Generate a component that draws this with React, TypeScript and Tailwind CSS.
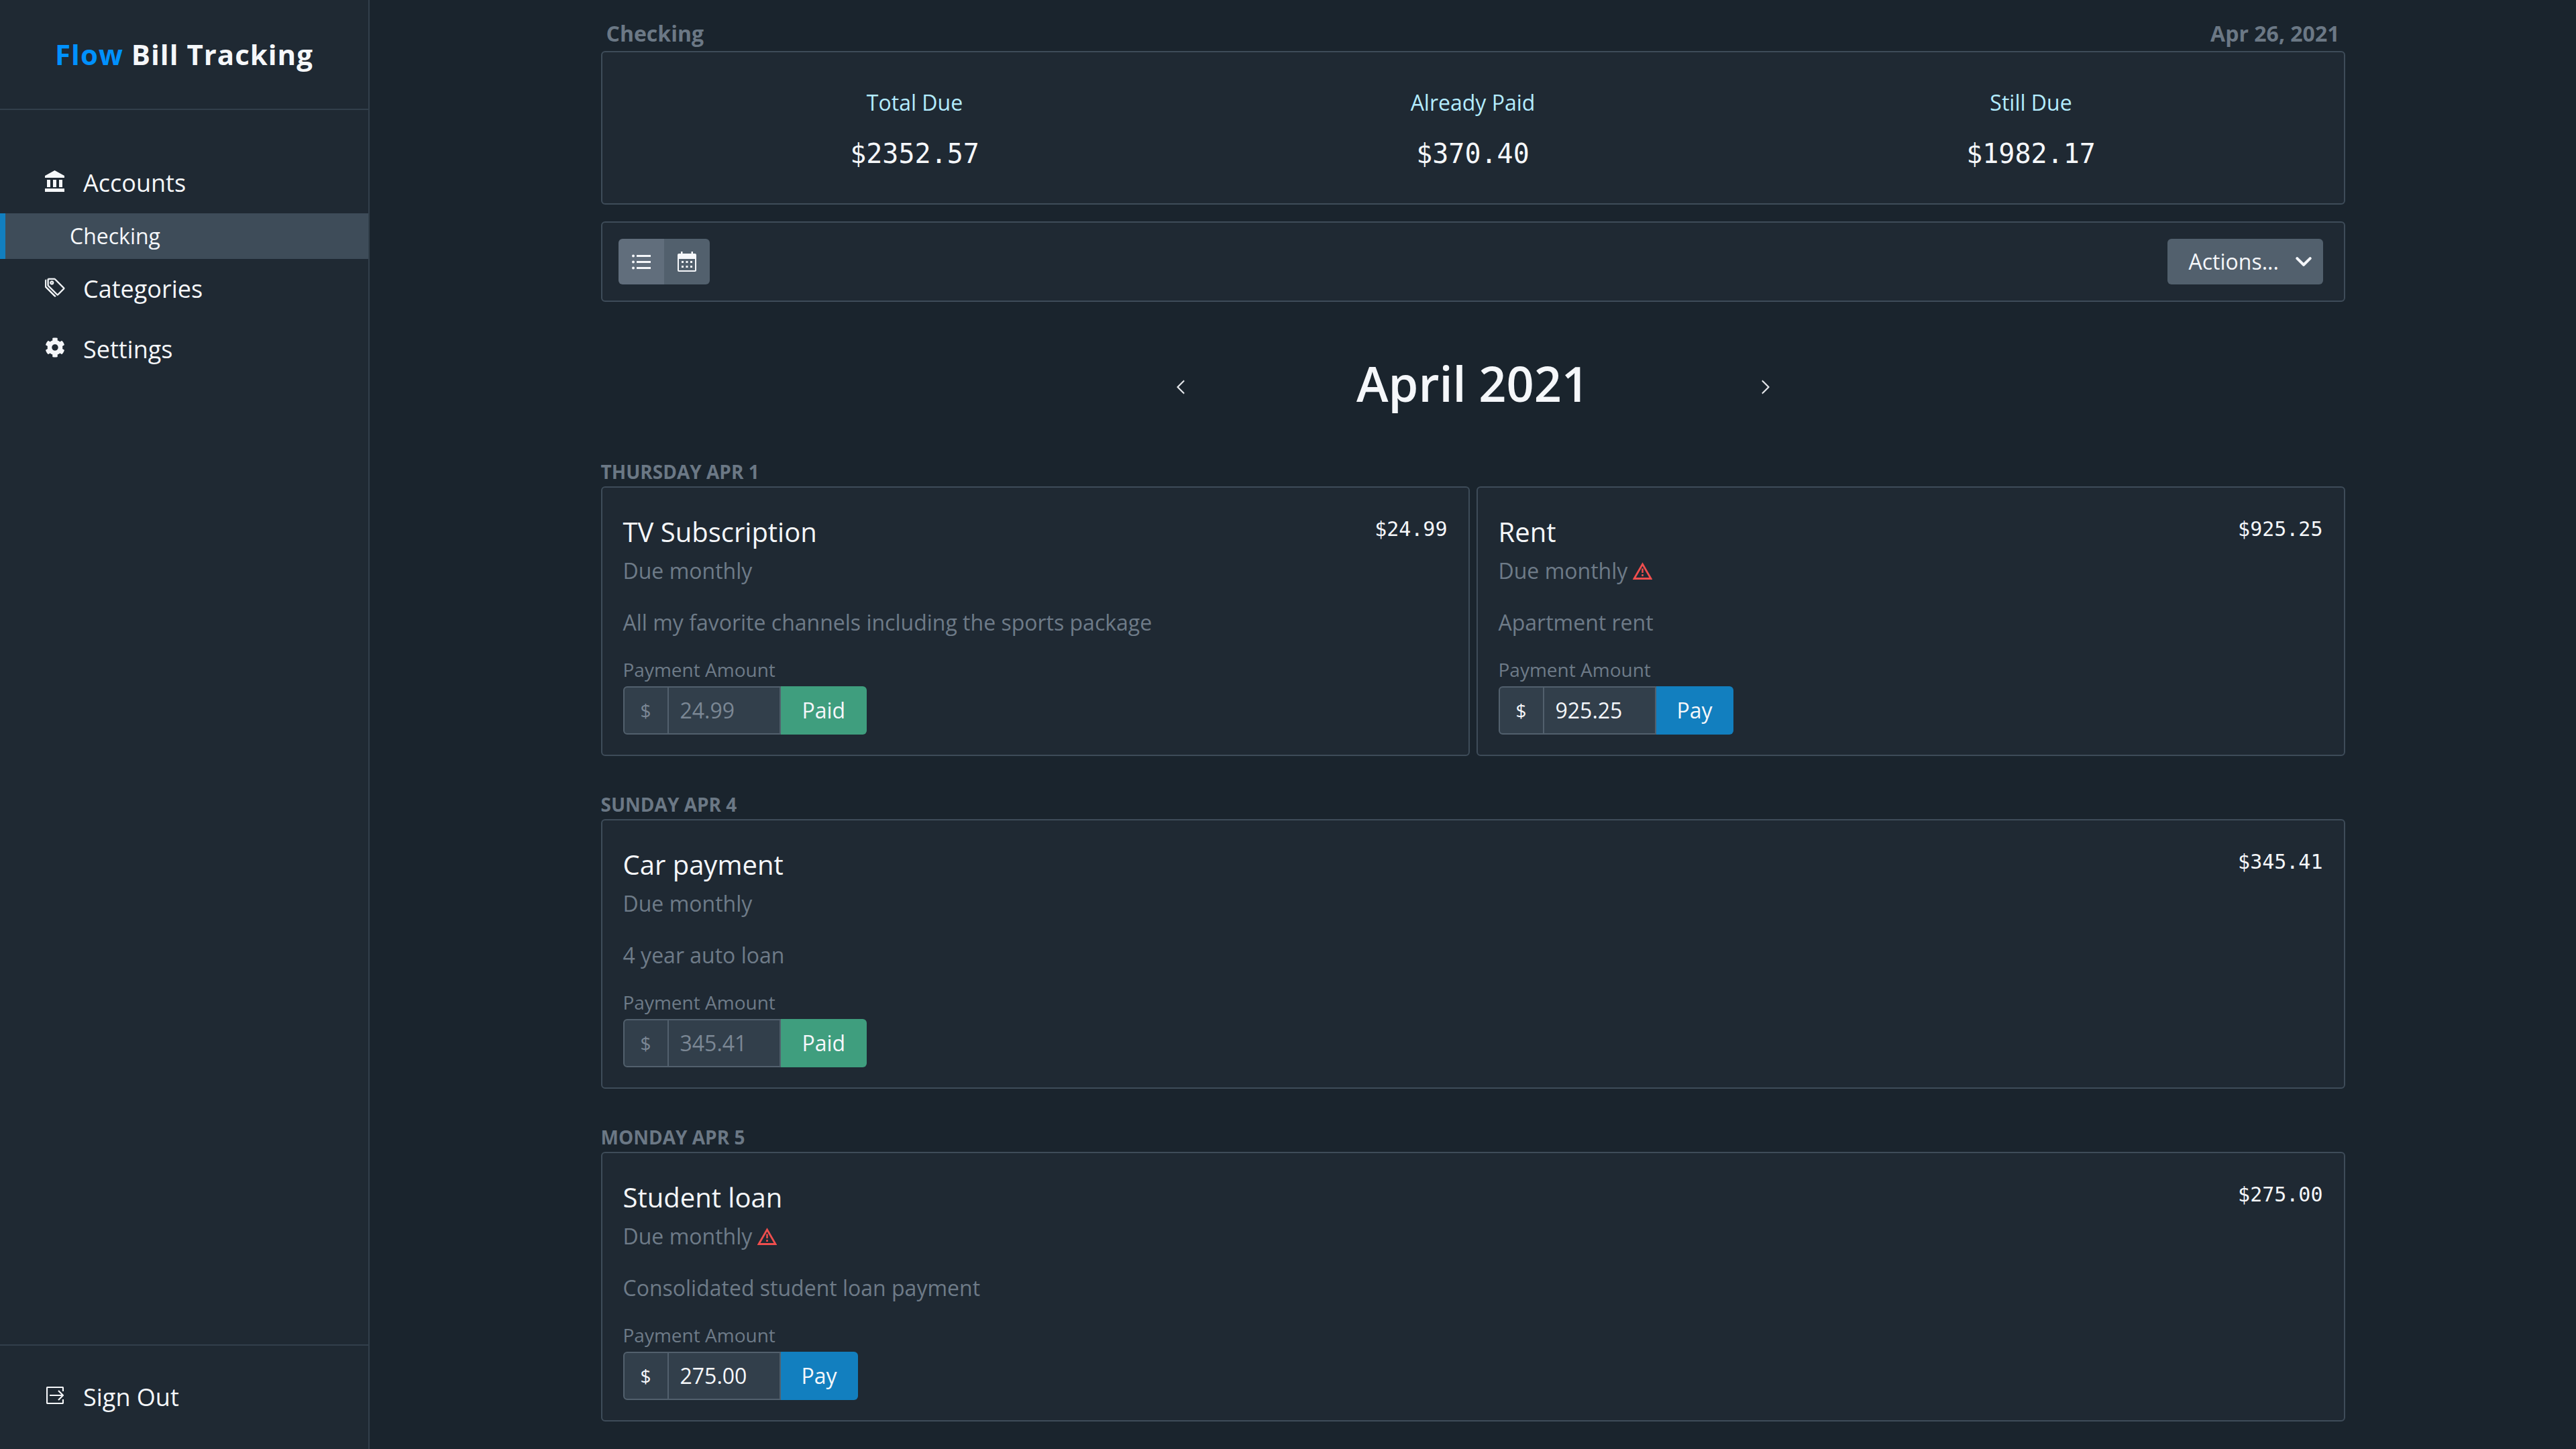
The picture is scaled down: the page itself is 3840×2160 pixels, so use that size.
import { BsChevronDown, BsChevronLeft, BsChevronRight, BsTags } from "react-icons/bs";
import { FaCog } from "react-icons/fa";
import type { ReactNode } from "react";

interface Bill {
  name: string;
  amount: string;
  note: string;
  paid: boolean;
  late?: boolean;
}

const DAYS: { label: string; bills: Bill[] }[] = [
  {
    label: "THURSDAY APR 1",
    bills: [
      { name: "TV Subscription", amount: "24.99", note: "All my favorite channels including the sports package", paid: true },
      { name: "Rent", amount: "925.25", note: "Apartment rent", paid: false, late: true },
    ],
  },
  {
    label: "SUNDAY APR 4",
    bills: [{ name: "Car payment", amount: "345.41", note: "4 year auto loan", paid: true }],
  },
  {
    label: "MONDAY APR 5",
    bills: [{ name: "Student loan", amount: "275.00", note: "Consolidated student loan payment", paid: false, late: true }],
  },
];

const TOTALS = [
  { label: "Total Due", value: "$2352.57" },
  { label: "Already Paid", value: "$370.40" },
  { label: "Still Due", value: "$1982.17" },
];

function BankIcon() {
  return (
    <svg viewBox="0 0 29 32" className="h-8 w-[29px]" fill="currentColor">
      <path d="M14.500 0 29 8v3H0V8z" />
      <path d="M3 14h5v11H3zM12 14h5v11h-5zM21 14h5v11h-5zM0 27h29v5H0z" />
    </svg>
  );
}

function SignOutIcon() {
  return (
    <svg viewBox="0 0 26 26" className="ml-[2px] h-[26px] w-[26px]" fill="none" stroke="currentColor" strokeWidth="2.2" strokeLinejoin="round">
      <path d="M25 7V2a1 1 0 0 0-1-1H2a1 1 0 0 0-1 1v22a1 1 0 0 0 1 1h22a1 1 0 0 0 1-1v-5" />
      <path d="M5 13h20M18 6l7 7-7 7" />
    </svg>
  );
}

function ListIcon() {
  return (
    <svg viewBox="0 0 28 23" className="h-[23px] w-7" fill="currentColor">
      <circle cx="2" cy="2.500" r="2" />
      <circle cx="2" cy="11.500" r="2" />
      <circle cx="2" cy="20.500" r="2" />
      <path d="M7 1h21v3H7zM7 10h21v3H7zM7 19h21v3H7z" />
    </svg>
  );
}

function CalendarIcon() {
  return (
    <svg viewBox="0 0 28 30" className="h-[30px] w-7" fill="currentColor">
      <path d="M5 0h2.500v3h13V0H23v3h3a2 2 0 0 1 2 2v23a2 2 0 0 1-2 2H2a2 2 0 0 1-2-2V5a2 2 0 0 1 2-2h3V0zM2 11v17h24V11H2z" />
      <path d="M6 14h3v3H6zM12.500 14h3v3h-3zM19 14h3v3h-3zM6 21h3v3H6zM12.500 21h3v3h-3zM19 21h3v3h-3z" />
    </svg>
  );
}

function WarningIcon() {
  return (
    <svg viewBox="0 0 29 26" className="h-[26px] w-[29px] text-[#ef4e4e]" fill="none" stroke="currentColor">
      <path d="M14.500 3 27 24.500H2z" strokeWidth="2.800" />
      <path d="M14.500 9.500v6.500M14.500 18v3" strokeWidth="2.500" />
    </svg>
  );
}

function NavItem({ icon, children }: { icon: ReactNode; children: ReactNode }) {
  return (
    <div className="flex h-[90px] items-center pl-[67px] text-[36px] text-[#f5f7fa]">
      <span className="mb-[6px] flex w-[57px] shrink-0 text-[30px]">{icon}</span>
      {children}
    </div>
  );
}

function BillCard({ bill }: { bill: Bill }) {
  return (
    <div className="flex h-[402px] min-w-0 flex-1 flex-col rounded-[6px] border-2 border-[#3e4c59] bg-[#1f2933] px-[31px] pt-[39px]">
      <div className="flex justify-between">
        <div className="text-[40px] leading-[54px] text-[#f5f7fa]">{bill.name}</div>
        <div className="h-[46px] font-['DejaVu_Sans_Mono'] text-[30px] leading-[46px] text-[#f5f7fa]">${bill.amount}</div>
      </div>
      <div className="mt-[7px] flex h-[48px] items-center gap-[8px] text-[32px] text-[#6e7b88]">
        Due monthly
        {bill.late && <WarningIcon />}
      </div>
      <div className="mt-[29px] text-[32px] leading-[48px] text-[#6e7b88]">{bill.note}</div>
      <div className="mt-[26px] text-[28px] leading-[40px] text-[#6e7b88]">Payment Amount</div>
      <div className="mt-[5px] flex h-[72px]">
        <div className={`flex w-[68px] items-center justify-center rounded-l-[6px] border-2 border-[#52606d] bg-[#323f4b] text-[28px] ${bill.paid ? "text-[#7b8794]" : "text-[#f5f7fa]"}`}>
          $
        </div>
        <div className={`flex w-[167px] items-center border-y-2 border-r-2 border-[#52606d] bg-[#323f4b] pl-[17px] text-[32px] ${bill.paid ? "text-[#7b8794]" : "text-[#f5f7fa]"}`}>
          {bill.amount}
        </div>
        <div className={`flex items-center rounded-r-[6px] text-[32px] text-[#f5f7fa] ${bill.paid ? "bg-[#3f9e7e] px-[32px]" : "bg-[#127fbf] px-[31px]"}`}>
          {bill.paid ? "Paid" : "Pay"}
        </div>
      </div>
    </div>
  );
}

export default function App() {
  return (
    <div className="flex h-[2160px] w-[3840px] overflow-hidden bg-[#1a242d] font-['Open_Sans',sans-serif]">
      <aside className="flex w-[551px] shrink-0 flex-col border-r-2 border-[#323f4b] bg-[#1f2933]">
        <div className="flex h-[164px] items-center justify-center border-b-2 border-[#323f4b] pb-[2px] text-[42px] font-bold tracking-[1px] text-[#f5f7fa]">
          <span className="text-[#0091ff]">Flow</span>&nbsp;Bill Tracking
        </div>
        <nav className="mt-[64px] flex-1">
          <NavItem icon={<BankIcon />}>Accounts</NavItem>
          <div className="flex h-[68px] items-center border-l-[8px] border-[#127fbf] bg-[#3e4c59] pl-[96px] text-[32px] text-[#f5f7fa]">
            Checking
          </div>
          <NavItem icon={<BsTags strokeWidth={0.3} />}>Categories</NavItem>
          <NavItem icon={<FaCog />}>Settings</NavItem>
        </nav>
        <div className="flex h-[156px] items-center border-t-2 border-[#323f4b]">
          <div className="flex-1">
            <NavItem icon={<SignOutIcon />}>Sign Out</NavItem>
          </div>
        </div>
      </aside>
      <main className="min-w-0 flex-1">
        <div className="mx-auto w-[2600px] pt-[28px]">
          <div className="flex justify-between px-[8px] text-[32px] font-bold leading-[44px] text-[#6b7885]">
            <span>Checking</span>
            <span>Apr 26, 2021</span>
          </div>
          <div className="mt-[4px] grid h-[229px] grid-cols-3 rounded-[6px] border-2 border-[#3e4c59] bg-[#1f2933] px-[50px] pt-[53px]">
            {TOTALS.map((total) => (
              <div key={total.label} className="text-center">
                <div className="text-[32px] leading-[44px] text-[#b3ecff]">{total.label}</div>
                <div className="mt-[26px] font-['DejaVu_Sans_Mono'] text-[40px] leading-[56px] text-[#f5f7fa]">{total.value}</div>
              </div>
            ))}
          </div>
          <div className="mt-[25px] flex h-[120px] items-center justify-between rounded-[6px] border-2 border-[#3e4c59] bg-[#1f2933] pl-[24px] pr-[31px]">
            <div className="flex h-[68px] overflow-hidden rounded-[6px] text-[#f5f7fa]">
              <div className="flex w-[68px] items-center justify-center bg-[#616e7c]">
                <ListIcon />
              </div>
              <div className="flex w-[68px] items-center justify-center bg-[#52606d]">
                <CalendarIcon />
              </div>
            </div>
            <div className="flex h-[68px] w-[232px] items-center justify-between rounded-[6px] bg-[#52606d] pl-[32px] pr-[16px] text-[32px] text-[#f5f7fa]">
              Actions...
              <BsChevronDown className="text-[26px]" strokeWidth={1.5} />
            </div>
          </div>
          <div className="mt-[61px] flex h-[120px] items-center justify-center text-[#f5f7fa]">
            <BsChevronLeft className="mt-[12px] text-[24px]" strokeWidth={0.5} />
            <div className="w-[848px] text-center text-[72px] font-semibold leading-[100px]">April 2021</div>
            <BsChevronRight className="mt-[12px] text-[24px]" strokeWidth={0.5} />
          </div>
          {DAYS.map((day) => (
            <section key={day.label} className="mt-[53px] first:mt-[54px]">
              <h2 className="text-[28px] font-bold leading-[38px] text-[#6b7885]">{day.label}</h2>
              <div className="mt-[3px] flex gap-[10px]">
                {day.bills.map((bill) => (
                  <BillCard key={bill.name} bill={bill} />
                ))}
              </div>
            </section>
          ))}
        </div>
      </main>
    </div>
  );
}
